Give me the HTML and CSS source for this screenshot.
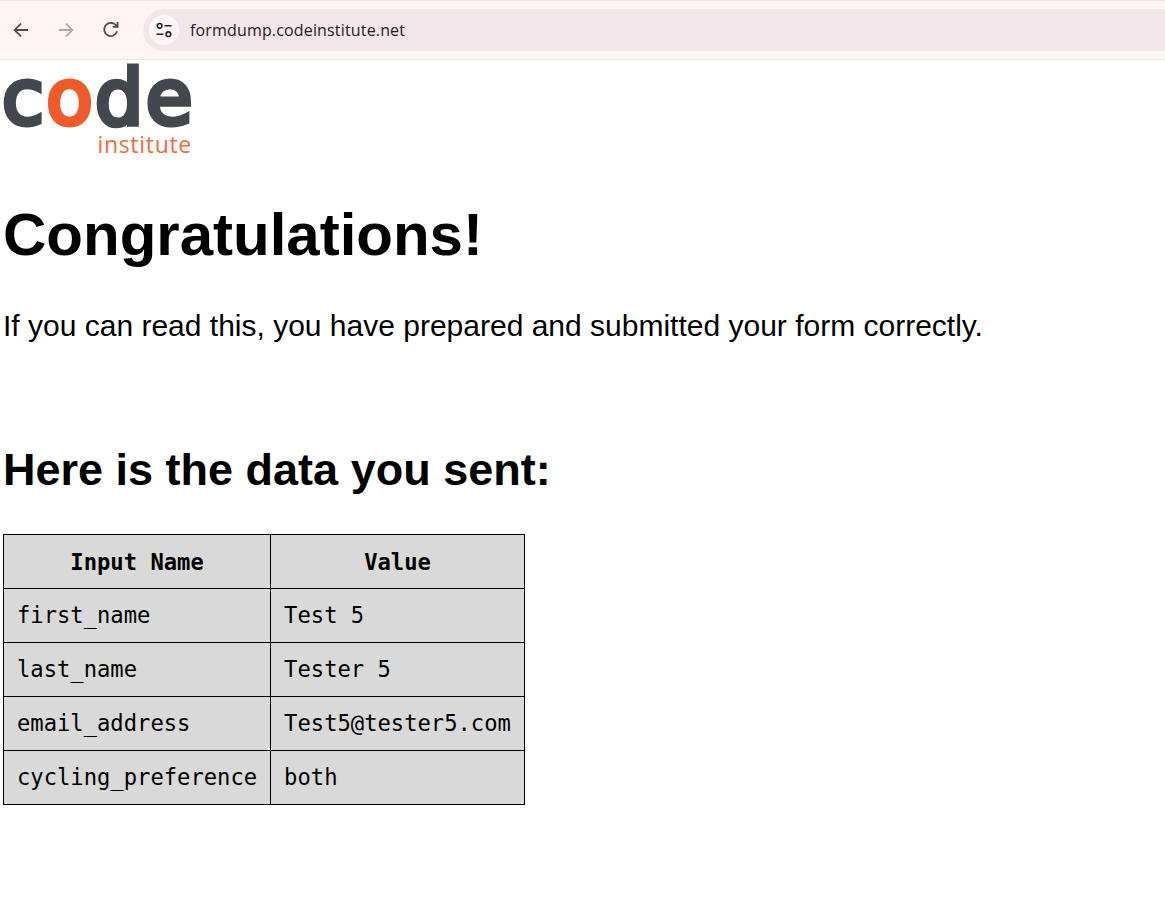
FILE: index.html
```html
<!DOCTYPE html>
<html lang="en">
<head>
<meta charset="utf-8">
<title>Form Dump</title>
<link rel="stylesheet" href="styles.css">
</head>
<body>
<header class="toolbar">
  <svg class="nav-icon back" viewBox="0 0 20 20"><path d="M16.5 10H4.5M10 4.2L4.2 10L10 15.8"/></svg>
  <svg class="nav-icon forward" viewBox="0 0 20 20"><path d="M3.5 10H15.5M10 4.2L15.8 10L10 15.8"/></svg>
  <svg class="nav-icon reload" viewBox="0 0 20 20"><path d="M15.6 11.2A6 6 0 1 1 14.2 5.4L16 7.2M16 2.8V7.2H11.6"/></svg>
  <div class="omnibox">
    <span class="site-chip">
      <svg class="tune" viewBox="0 0 20 20"><circle cx="5.6" cy="5.8" r="2.3"/><path d="M10.5 5.8H17.5M2.5 14.2H9.5"/><circle cx="14.4" cy="14.2" r="2.3"/></svg>
    </span>
    <span class="url">formdump.codeinstitute.net</span>
  </div>
</header>
<main class="page">
  <div class="logo">
    <div class="logo-code">c<span class="logo-o">o</span>de</div>
    <div class="logo-sub">institute</div>
  </div>
  <h1>Congratulations!</h1>
  <p>If you can read this, you have prepared and submitted your form correctly.</p>
  <h2>Here is the data you sent:</h2>
  <table>
    <tr><th>Input Name</th><th>Value</th></tr>
    <tr><td>first_name</td><td>Test 5</td></tr>
    <tr><td>last_name</td><td>Tester 5</td></tr>
    <tr><td>email_address</td><td>Test5@tester5.com</td></tr>
    <tr><td>cycling_preference</td><td>both</td></tr>
  </table>
</main>
</body>
</html>
```
FILE: styles.css
```css
html, body { margin: 0; padding: 0; background: #fff; }
body { font-family: "Liberation Sans", Arial, sans-serif; color: #000; overflow: hidden; }

.toolbar {
  height: 60px;
  box-sizing: border-box;
  display: flex;
  align-items: center;
  background: #fff5f4;
  border-top: 1px solid #fbe3e4;
  border-bottom: 1px solid #f3e2e6;
  padding-left: 10px;
}
.nav-icon { width: 22px; height: 22px; fill: none; stroke: #5c4548; stroke-width: 1.6; margin-right: 23px; flex: none; }
.forward { stroke: #b5a5a7; }
.reload { margin-right: 21px; }
.omnibox {
  flex: 1;
  height: 42px;
  display: flex;
  align-items: center;
  background: #f3e6ea;
  border-radius: 21px 0 0 21px;
  padding-left: 6px;
}
.site-chip {
  width: 30px; height: 30px;
  border-radius: 50%;
  background: #fff7f7;
  display: flex; align-items: center; justify-content: center;
  margin-right: 11px;
}
.tune { width: 20px; height: 20px; fill: none; stroke: #2a1e20; stroke-width: 1.6; }
.url { font-family: "Open Sans", "Noto Sans", sans-serif; font-size: 16px; letter-spacing: 0.16px; color: #1f1b24; }

.page { padding-left: 3px; }
.logo { width: 189px; height: 94px; margin-left: -1px; display: flex; flex-direction: column; }
.logo-code {
  font-family: "DejaVu Sans", sans-serif;
  font-weight: 400;
  font-size: 76px;
  line-height: 76px;
  height: 74px;
  letter-spacing: 2.4px;
  white-space: nowrap;
  -webkit-text-stroke: 5px #43474e;
  color: #43474e;
}
.logo-o { color: #f15a29; -webkit-text-stroke-color: #f15a29; }
.logo-sub {
  font-family: "Open Sans", sans-serif;
  font-size: 23px;
  line-height: 20px;
  letter-spacing: 0.7px;
  color: #f26b3f;
  align-self: flex-end;
  margin-right: -1px;
}
h1 { font-size: 60px; line-height: 66px; margin: 48px 0 0; font-weight: 700; }
p { font-size: 30px; line-height: 34px; margin: 41px 0 0; }
h2 { font-size: 45px; line-height: 50px; margin: 102px 0 0; font-weight: 700; }
table {
  border-collapse: collapse;
  margin: 39px 0 0;
  background: #d9d9d9;
  font-family: "DejaVu Sans Mono", monospace;
  font-size: 22.17px;
}
th, td {
  border: 1px solid #000;
  height: 54px;
  box-sizing: border-box;
  padding: 0 13px;
  line-height: 26px;
}
td { text-align: left; font-weight: 400; padding-bottom: 2px; }
th { text-align: center; font-weight: 700; }
```
